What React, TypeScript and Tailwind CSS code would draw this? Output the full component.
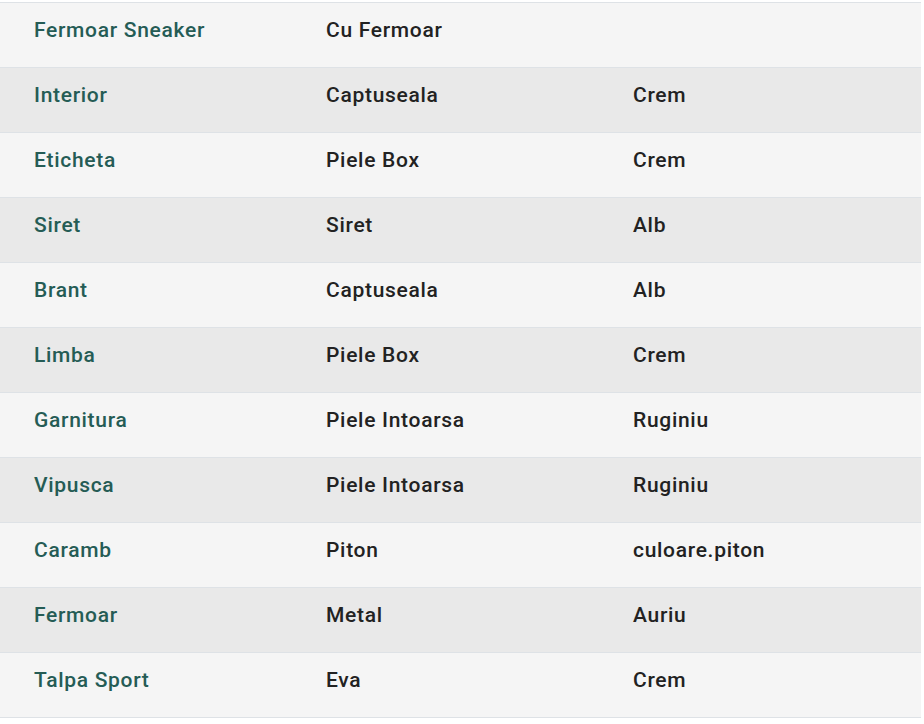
const rows: [string, string, string][] = [
  ["Fermoar Sneaker", "Cu Fermoar", ""],
  ["Interior", "Captuseala", "Crem"],
  ["Eticheta", "Piele Box", "Crem"],
  ["Siret", "Siret", "Alb"],
  ["Brant", "Captuseala", "Alb"],
  ["Limba", "Piele Box", "Crem"],
  ["Garnitura", "Piele Intoarsa", "Ruginiu"],
  ["Vipusca", "Piele Intoarsa", "Ruginiu"],
  ["Caramb", "Piton", "culoare.piton"],
  ["Fermoar", "Metal", "Auriu"],
  ["Talpa Sport", "Eva", "Crem"],
];

export default function App() {
  return (
    <div className="w-[924px] h-[724px] bg-white pt-[2px] font-['Roboto',sans-serif]">
      <div className="w-[921px] border-t border-[#dee2e6]">
        {rows.map(([part, material, color], i) => (
          <div
            key={i}
            className={`flex h-[65px] items-center pb-[8px] border-b border-[#dee2e6] text-[21px] font-medium tracking-[0.7px] ${
              i % 2 === 0 ? "bg-[#f5f5f5]" : "bg-[#e9e9e9]"
            }`}
          >
            <div className="w-[292px] pl-[34px] text-[#255c55]">{part}</div>
            <div className="w-[307px] pl-[34px] text-[#222222]">{material}</div>
            <div className="flex-1 pl-[34px] text-[#222222]">{color}</div>
          </div>
        ))}
      </div>
    </div>
  );
}
